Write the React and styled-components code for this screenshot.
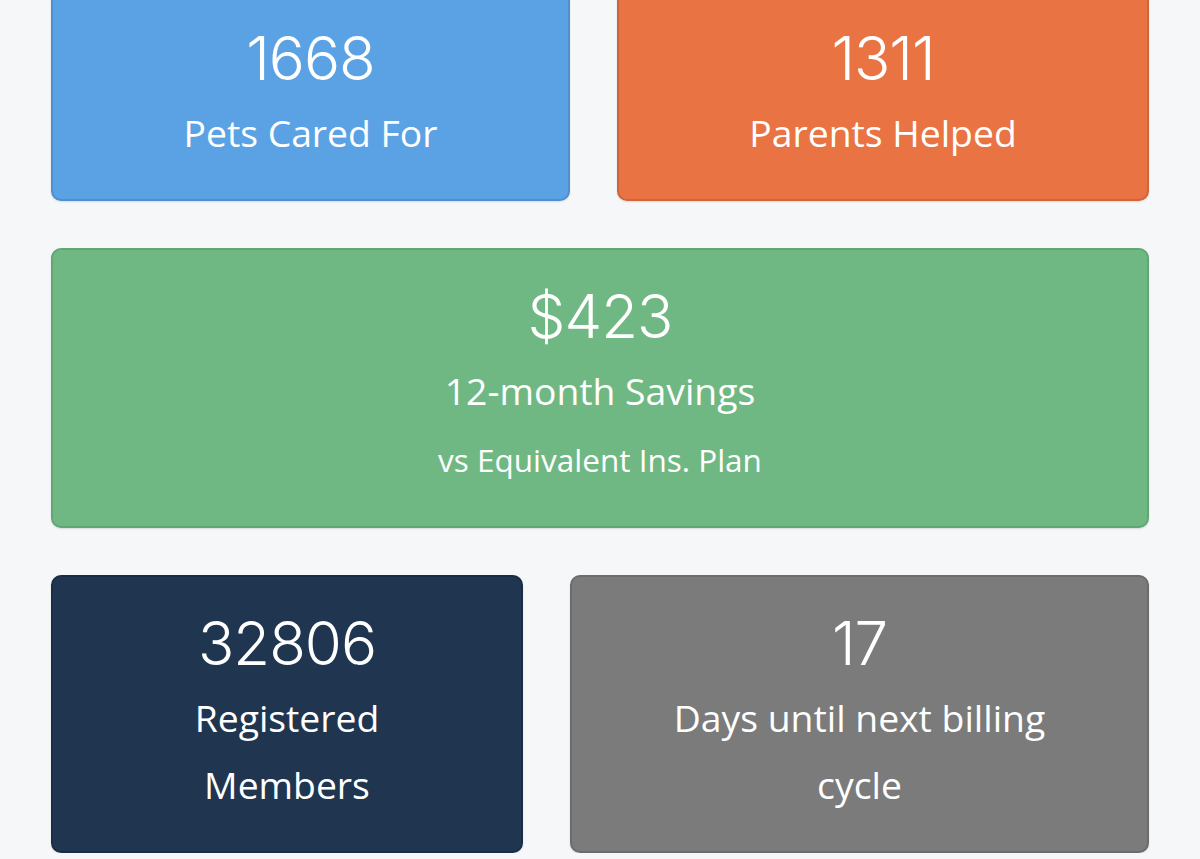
import React from 'react';
import styled, { createGlobalStyle } from 'styled-components';

const GlobalStyle = createGlobalStyle`
  html, body {
    margin: 0;
    padding: 0;
    background: #f6f7f9;
    overflow: hidden;
  }
`;

const rows = [
  {
    cols: '519fr 532fr',
    cards: [
      { value: '1668', label: 'Pets Cared For', bg: '#5aa2e4', edge: '#4e8fcf' },
      { value: '1311', label: 'Parents Helped', bg: '#e97342', edge: '#d0653a' },
    ],
  },
  {
    cols: '1fr',
    cards: [
      { value: '$423', label: '12-month Savings', note: 'vs Equivalent Ins. Plan', bg: '#70b883', edge: '#62a674' },
    ],
  },
  {
    cols: '472fr 579fr',
    cards: [
      { value: '32806', label: 'Registered Members', bg: '#203550', edge: '#1b2d45' },
      { value: '17', label: 'Days until next billing cycle', bg: '#7a7b7a', edge: '#6b6c6b' },
    ],
  },
];

function App() {
  return (
    <Page>
      <GlobalStyle />
      {rows.map((row, i) => (
        <Row key={i} cols={row.cols}>
          {row.cards.map(s => (
            <Card key={s.label} bg={s.bg} edge={s.edge}>
              <Value>{s.value}</Value>
              <Label>{s.label}</Label>
              {s.note && <Note>{s.note}</Note>}
            </Card>
          ))}
        </Row>
      ))}
    </Page>
  );
}

export default App;

const Page = styled.div`
  display: flex;
  flex-direction: column;
  gap: 47px;
  padding: 0 51px;
  margin-top: -10px;
`;

const Row = styled.div`
  display: grid;
  grid-template-columns: ${props => props.cols};
  gap: 47px;
`;

const Card = styled.div`
  box-sizing: border-box;
  padding: 33px 60px 33px;
  background: ${props => props.bg};
  border: 2px solid ${props => props.edge};
  border-radius: 10px;
  box-shadow: 0 1px 2px rgba(0, 0, 0, 0.12);
  color: #fff;
  text-align: center;
`;

const Value = styled.div`
  font-family: Inter, 'Open Sans', sans-serif;
  font-weight: 300;
  font-size: 60px;
  line-height: 67px;
  letter-spacing: -1px;
  margin-bottom: 7px;
`;

const Label = styled.div`
  font-family: 'Open Sans', sans-serif;
  font-size: 37.3px;
  line-height: 67px;
`;

const Note = styled.div`
  font-family: 'Open Sans', sans-serif;
  font-size: 31.5px;
  line-height: 67px;
  margin-top: 2px;
`;
